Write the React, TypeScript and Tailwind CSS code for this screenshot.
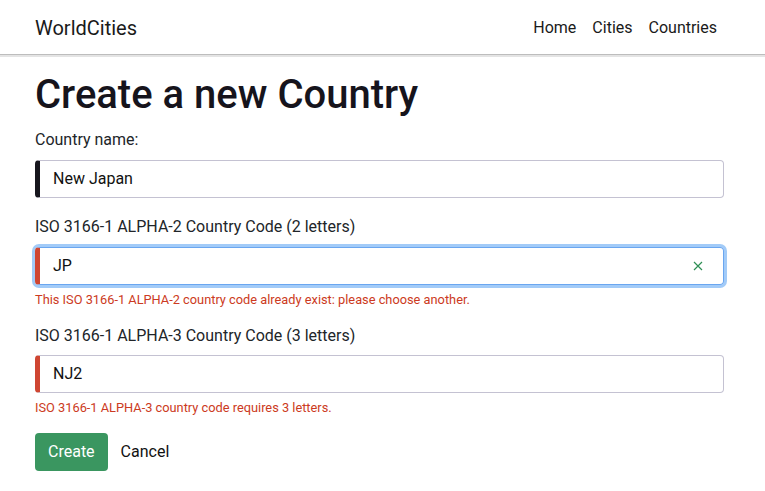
export default function App() {
  const navLinks = ["Home", "Cities", "Countries"];

  return (
    <div className="min-h-screen bg-white text-[#212529] font-['Roboto',sans-serif]">
      <nav className="h-[55px] border-b border-[#bdbdbd] shadow-[0_2px_0_#e4e4e4] flex items-center justify-between pl-[35px] pr-[48px] pt-[1px]">
        <span className="text-[20px] text-[#1a1a1a]">WorldCities</span>
        <div className="flex gap-[16px] text-[16px] text-[#1a1a1a]">
          {navLinks.map((l) => (
            <a key={l} href="#">
              {l}
            </a>
          ))}
        </div>
      </nav>

      <main className="pl-[35px] pr-[41px] pt-[16px]">
        <h1 className="text-[40px] font-medium leading-[1.2] text-[#16141c] mb-[9px]">
          Create a new Country
        </h1>

        <form className="flex flex-col">
          <label className="text-[16px] leading-6 mb-[8px]">Country name:</label>
          <div className="h-[38px] flex items-center rounded-[4px] border border-[#c4c2d2] border-l-[5px] border-l-[#17161d] pl-[13px] text-[16px] text-[#111]">
            New Japan
          </div>

          <label className="text-[16px] leading-6 mt-[17px] mb-[8px]">
            ISO 3166-1 ALPHA-2 Country Code (2 letters)
          </label>
          <div className="h-[38px] flex items-center justify-between rounded-[4px] border border-[#6aa6f0] border-l-[5px] border-l-[#cf4632] shadow-[0_0_0_3px_#a2cbf8] pl-[13px] pr-[20px] text-[16px] text-[#111]">
            <span>JP</span>
            <svg width="10" height="10" viewBox="0 0 10 10" className="text-[#2f8f55]">
              <path d="M1 1L9 9M9 1L1 9" stroke="currentColor" strokeWidth="1.2" />
            </svg>
          </div>
          <p className="text-[12.8px] text-[#cc3a22] mt-[5px]">
            This ISO 3166-1 ALPHA-2 country code already exist: please choose another.
          </p>

          <label className="text-[16px] leading-6 mt-[15px] mb-[7px]">
            ISO 3166-1 ALPHA-3 Country Code (3 letters)
          </label>
          <div className="h-[38px] flex items-center rounded-[4px] border border-[#c4c2d2] border-l-[5px] border-l-[#cf4632] pl-[13px] text-[16px] text-[#111]">
            NJ2
          </div>
          <p className="text-[12.8px] text-[#cc3a22] mt-[5px]">
            ISO 3166-1 ALPHA-3 country code requires 3 letters.
          </p>

          <div className="flex items-center gap-[13px] mt-[16px]">
            <button
              type="button"
              className="h-[38px] px-[13px] rounded-[4px] bg-[#3a9660] text-white text-[16px]"
            >
              Create
            </button>
            <a href="#" className="text-[16px] text-[#111]">
              Cancel
            </a>
          </div>
        </form>
      </main>
    </div>
  );
}
